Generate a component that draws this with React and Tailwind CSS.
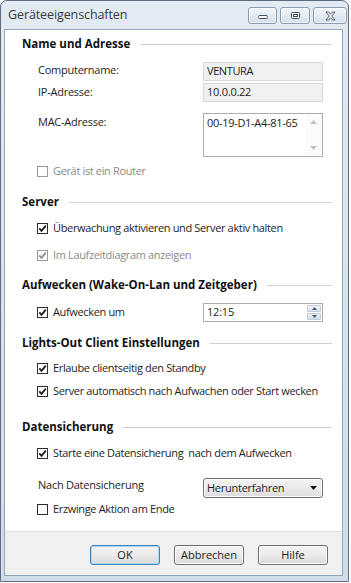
import React from "react";

const font = { fontFamily: '"Open Sans", "Noto Sans", sans-serif' };

function Check({ checked, disabled }) {
  return (
    <span
      className={`w-[11px] h-[11px] shrink-0 border bg-white flex items-center justify-center ${
        disabled ? "border-[#9a9a9a]" : "border-[#2e2e2e]"
      }`}
    >
      {checked && (
        <svg width="9" height="9" viewBox="0 0 9 9">
          <path
            d="M1.3 4.4 L3.5 6.9 L7.8 1.6"
            fill="none"
            stroke={disabled ? "#8c8c8c" : "#1a1a1a"}
            strokeWidth="1.7"
          />
        </svg>
      )}
    </span>
  );
}

function Header({ children, mt }) {
  return (
    <div className={`h-[20px] flex items-center pl-[17px] pr-[10px] ${mt}`}>
      <span className="text-[11.5px] font-bold text-[#111] whitespace-nowrap">
        {children}
      </span>
      <span className="flex-1 h-px bg-[#c8d3df] ml-[10px]" />
    </div>
  );
}

function CheckRow({ children, checked, disabled, mt }) {
  return (
    <div className={`h-[16px] flex items-center pl-[32px] ${mt}`}>
      <Check checked={checked} disabled={disabled} />
      <span
        className={`ml-[5px] text-[11px] tracking-[-0.35px] whitespace-nowrap ${
          disabled ? "text-[#8a8a8a]" : "text-[#1e1e1e]"
        }`}
      >
        {children}
      </span>
    </div>
  );
}

function TitleBtn({ w, children }) {
  return (
    <div
      className={`${w} h-[17px] rounded-[3px] border border-[#8c9cb0] bg-gradient-to-b from-[#f2f6fa] to-[#d5e0ec] flex items-center justify-center shadow-[inset_0_0_0_1px_rgba(255,255,255,0.6)]`}
    >
      {children}
    </div>
  );
}

function FooterBtn({ children, primary }) {
  return (
    <div
      className={`w-[70px] h-[20px] rounded-[3px] border flex items-center justify-center text-[11px] text-[#1e1e1e] bg-gradient-to-b from-[#f4f4f4] via-[#ebebeb] to-[#d9d9d9] ${
        primary ? "border-[#3b86c0] shadow-[inset_0_0_0_1px_#a9d7f3]" : "border-[#707070] shadow-[inset_0_0_0_1px_#fcfcfc]"
      }`}
    >
      {children}
    </div>
  );
}

export default function App() {
  return (
    <div className="w-[351px] h-[583px] bg-white overflow-hidden" style={font}>
      <div className="w-[349px] h-[582px] rounded-t-[7px] border border-[#5f6d7c] bg-gradient-to-b from-[#e2eaf3] to-[#d0dcea] flex flex-col">
        {/* title bar */}
        <div className="h-[28px] flex items-start shrink-0">
          <span className="mt-[5px] ml-[7px] text-[12.5px] text-[#3a3a3a] tracking-[-0.1px]">
            Geräteeigenschaften
          </span>
          <div className="ml-auto mt-[6px] mr-[1px] flex gap-[3px]">
            <TitleBtn w="w-[29px]">
              <svg width="12" height="8" viewBox="0 0 12 8">
                <rect x="1.5" y="3.5" width="9" height="3" rx="1" fill="#fff" stroke="#3f4d5e" />
              </svg>
            </TitleBtn>
            <TitleBtn w="w-[30px]">
              <svg width="11" height="9" viewBox="0 0 11 9">
                <rect x="1.5" y="1.5" width="8" height="6" rx="1" fill="#fff" stroke="#3f4d5e" />
                <rect x="3.5" y="3.5" width="4" height="2" fill="none" stroke="#3f4d5e" />
              </svg>
            </TitleBtn>
            <TitleBtn w="w-[34px]">
              <svg width="13" height="10" viewBox="0 0 13 10">
                <path
                  d="M2 1 L4.5 1 L6.5 3.2 L8.5 1 L11 1 L7.8 5 L11 9 L8.5 9 L6.5 6.8 L4.5 9 L2 9 L5.2 5 Z"
                  fill="#fff"
                  stroke="#3f4d5e"
                  strokeWidth="0.9"
                  strokeLinejoin="round"
                />
              </svg>
            </TitleBtn>
          </div>
        </div>

        {/* client */}
        <div className="ml-[3px] mr-[5px] flex-1 flex flex-col border border-[#94a6ba]">
          <div className="h-[501px] bg-white flex flex-col shrink-0">
            <Header mt="mt-[4px]">Name und Adresse</Header>

            <div className="h-[19px] mt-[8px] flex items-start pl-[33px]">
              <span className="w-[165px] text-[11px] leading-[16px] text-[#1e1e1e] tracking-[-0.25px]">Computername:</span>
              <div className="w-[120px] h-[19px] bg-[#f0f0f0] border border-[#d9d9d9] flex items-center pl-[3px] text-[11px] text-[#1e1e1e] tracking-[-0.4px]">
                VENTURA
              </div>
            </div>

            <div className="h-[19px] mt-[2px] flex items-center pl-[33px]">
              <span className="w-[165px] text-[11px] text-[#1e1e1e] tracking-[-0.25px]">IP-Adresse:</span>
              <div className="w-[120px] h-[19px] bg-[#f0f0f0] border border-[#d9d9d9] flex items-center pl-[3px] text-[11px] text-[#1e1e1e] tracking-[-0.25px]">
                10.0.0.22
              </div>
            </div>

            <div className="h-[44px] mt-[11px] flex items-start pl-[33px]">
              <span className="w-[165px] text-[11px] text-[#1e1e1e] leading-[16px] mt-[1px] tracking-[-0.25px]">MAC-Adresse:</span>
              <div className="w-[120px] h-[44px] bg-white border border-[#abadb3] flex">
                <span className="flex-1 pl-[3px] pt-[2px] text-[11px] leading-[14px] text-[#1e1e1e] tracking-[-0.3px] whitespace-nowrap">
                  00-19-D1-A4-81-65
                </span>
                <div className="w-[17px] bg-[#fbfbfb] flex flex-col items-center justify-between py-[6px]">
                  <svg width="7" height="4" viewBox="0 0 7 4">
                    <path d="M0 4 L3.5 0 L7 4 Z" fill="#c2c2c2" />
                  </svg>
                  <svg width="7" height="4" viewBox="0 0 7 4">
                    <path d="M0 0 L3.5 4 L7 0 Z" fill="#c2c2c2" />
                  </svg>
                </div>
              </div>
            </div>

            <CheckRow mt="mt-[6px]" disabled>Gerät ist ein Router</CheckRow>

            <Header mt="mt-[13px]">Server</Header>
            <CheckRow mt="mt-[8px]" checked>Überwachung aktivieren und Server aktiv halten</CheckRow>
            <CheckRow mt="mt-[11px]" checked disabled>Im Laufzeitdiagram anzeigen</CheckRow>

            <Header mt="mt-[12px]">Aufwecken (Wake-On-Lan und Zeitgeber)</Header>
            <div className="h-[19px] mt-[8px] flex items-center pl-[32px]">
              <div className="w-[166px] flex items-center">
                <Check checked />
                <span className="ml-[5px] text-[11px] text-[#1e1e1e] tracking-[-0.35px]">Aufwecken um</span>
              </div>
              <div className="w-[120px] h-[19px] bg-white border border-[#abadb3] flex">
                <span className="flex-1 pl-[3px] flex items-center text-[11px] text-[#1e1e1e] tracking-[-0.2px]">12:15</span>
                <div className="w-[16px] flex flex-col p-[1px] gap-[1px]">
                  <div className="flex-1 bg-gradient-to-b from-[#f1f5f9] to-[#d9e3ee] border border-[#c3cdd8] rounded-[1px] flex items-center justify-center">
                    <svg width="5" height="3" viewBox="0 0 5 3">
                      <path d="M0 3 L2.5 0 L5 3 Z" fill="#4d5a6a" />
                    </svg>
                  </div>
                  <div className="flex-1 bg-gradient-to-b from-[#e9eff5] to-[#d3dde9] border border-[#c3cdd8] rounded-[1px] flex items-center justify-center">
                    <svg width="5" height="3" viewBox="0 0 5 3">
                      <path d="M0 0 L2.5 3 L5 0 Z" fill="#4d5a6a" />
                    </svg>
                  </div>
                </div>
              </div>
            </div>

            <Header mt="mt-[11px]">Lights-Out Client Einstellungen</Header>
            <CheckRow mt="mt-[7px]" checked>Erlaube clientseitig den Standby</CheckRow>
            <CheckRow mt="mt-[7px]" checked>Server automatisch nach Aufwachen oder Start wecken</CheckRow>

            <Header mt="mt-[18px]">Datensicherung</Header>
            <CheckRow mt="mt-[8px]" checked>Starte eine Datensicherung&nbsp; nach dem Aufwecken</CheckRow>

            <div className="h-[20px] mt-[17px] flex items-start pl-[33px]">
              <span className="w-[165px] text-[11px] text-[#1e1e1e] leading-[14px] tracking-[-0.25px]">Nach Datensicherung</span>
              <div className="w-[120px] h-[20px] rounded-[3px] border border-[#707070] bg-gradient-to-b from-[#f3f3f3] via-[#ebebeb] to-[#dcdcdc] flex items-center pl-[3px] pr-[5px] shadow-[inset_0_0_0_1px_#fbfbfb]">
                <span className="flex-1 text-[11px] text-[#1e1e1e] tracking-[-0.25px]">Herunterfahren</span>
                <svg width="7" height="4" viewBox="0 0 7 4">
                  <path d="M0 0 L3.5 4 L7 0 Z" fill="#111" />
                </svg>
              </div>
            </div>
            <CheckRow mt="mt-[3px]">Erzwinge Aktion am Ende</CheckRow>
          </div>

          <div className="flex-1 bg-[#f0f0f0] border-t border-[#dfdfdf] flex justify-end items-start pt-[13px] pr-[14px] gap-[14px]">
            <FooterBtn primary>OK</FooterBtn>
            <FooterBtn>Abbrechen</FooterBtn>
            <FooterBtn>Hilfe</FooterBtn>
          </div>
        </div>
        <div className="h-[5px] shrink-0" />
      </div>
    </div>
  );
}
